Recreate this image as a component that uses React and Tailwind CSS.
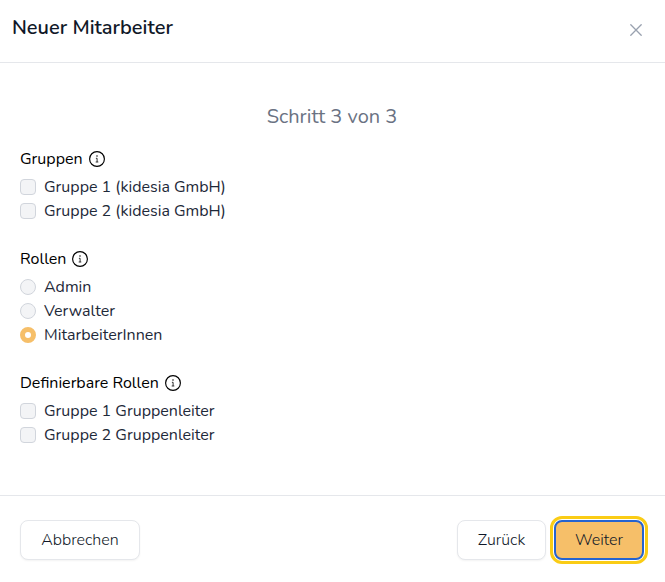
const InfoIcon = () => (
  <svg width="16" height="16" viewBox="0 0 16 16" fill="none" stroke="#000" className="shrink-0">
    <circle cx="8" cy="8" r="7.4" strokeWidth="1.15" />
    <circle cx="8" cy="5" r="0.75" fill="#000" stroke="none" />
    <path d="M6.9 7.3h1.2v3.6M6.7 11h2.6" strokeWidth="0.8" />
  </svg>
)

const Option = ({ type, label, checked }) => (
  <label className="flex h-6 items-center gap-2">
    <input
      type={type}
      defaultChecked={checked}
      className={`h-4 w-4 shrink-0 appearance-none border ${type === 'radio' ? 'rounded-full' : 'rounded-[4px]'} ${
        checked ? 'border-[5px] border-[#f6bf69] bg-white' : 'border-gray-300 bg-gray-100'
      }`}
    />
    <span className="whitespace-nowrap text-gray-800">{label}</span>
  </label>
)

const Section = ({ title, children }) => (
  <fieldset>
    <div className="mb-1 flex h-6 items-center gap-1.5">
      <span className="whitespace-nowrap text-black">{title}</span>
      <InfoIcon />
    </div>
    {children}
  </fieldset>
)

const secondary =
  'h-10 rounded-lg border border-gray-200 bg-white font-light text-gray-900 shadow-xs whitespace-nowrap'

export default function App() {
  return (
    <div className="flex h-[582px] w-[665px] flex-col overflow-hidden bg-white font-['Nunito',Lato,sans-serif] text-base">
      <header className="flex h-[63px] shrink-0 items-start justify-between border-b border-gray-200 pt-3.5 pr-[23px] pl-3">
        <h2 className="text-xl font-semibold text-gray-900">Neuer Mitarbeiter</h2>
        <button type="button" aria-label="Schließen" className="mt-2.5 text-gray-400">
          <svg width="12" height="12" viewBox="0 0 12 12" stroke="currentColor" strokeWidth="1.3" strokeLinecap="round">
            <path d="M0.8 0.8 11.2 11.2M11.2 0.8 0.8 11.2" />
          </svg>
        </button>
      </header>

      <main className="flex h-[432px] shrink-0 flex-col pt-10 pr-[21px] pl-5">
        <h3 className="mb-4 text-center text-xl text-gray-500">Schritt 3 von 3</h3>
        <div className="flex flex-col gap-6">
          <Section title="Gruppen">
            <Option type="checkbox" label="Gruppe 1 (kidesia GmbH)" />
            <Option type="checkbox" label="Gruppe 2 (kidesia GmbH)" />
          </Section>
          <Section title="Rollen">
            <Option type="radio" label="Admin" />
            <Option type="radio" label="Verwalter" />
            <Option type="radio" label="MitarbeiterInnen" checked />
          </Section>
          <Section title="Definierbare Rollen">
            <Option type="checkbox" label="Gruppe 1 Gruppenleiter" />
            <Option type="checkbox" label="Gruppe 2 Gruppenleiter" />
          </Section>
        </div>
      </main>

      <footer className="flex flex-1 items-start justify-between border-t border-gray-200 pt-6 pr-[21px] pl-5">
        <button type="button" className={`w-[120px] ${secondary}`}>Abbrechen</button>
        <div className="flex gap-2">
          <button type="button" className={`w-[89px] ${secondary}`}>Zurück</button>
          <button
            type="button"
            className="h-10 w-[90px] rounded-lg border-2 border-[#2563cf] bg-[#f6bf69] font-light text-gray-900 outline-[3px] outline-offset-1 outline-[#facc15]"
          >
            Weiter
          </button>
        </div>
      </footer>
    </div>
  )
}
